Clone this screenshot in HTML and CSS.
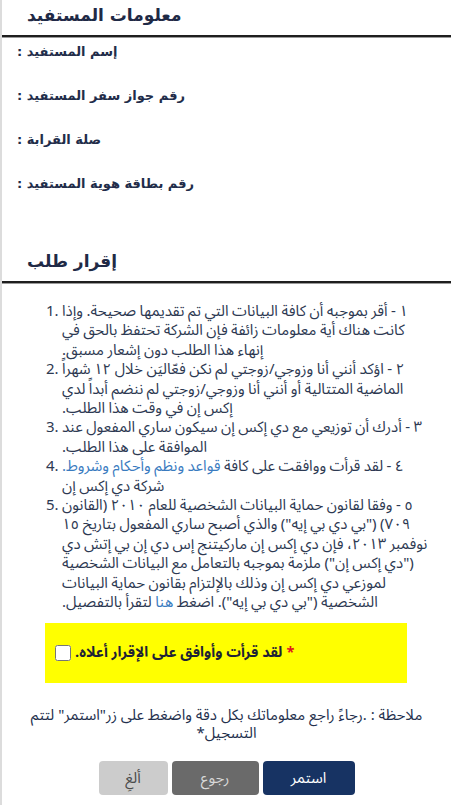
FILE: index.html
```html
<!DOCTYPE html>
<html lang="ar">
<head>
<meta charset="utf-8">
<title>معلومات المستفيد</title>
<link rel="stylesheet" href="styles.css">
</head>
<body>
<div class="page" dir="rtl">
  <section class="block">
    <h2 class="block-title">معلومات المستفيد</h2>
    <div class="fields">
      <div class="field">إسم المستفيد :</div>
      <div class="field">رقم جواز سفر المستفيد :</div>
      <div class="field">صلة القرابة :</div>
      <div class="field">رقم بطاقة هوية المستفيد :</div>
    </div>
  </section>

  <section class="block block-terms">
    <h2 class="block-title">إقرار طلب</h2>
    <ol class="terms" dir="ltr">
      <li><div class="term" dir="rtl">١ - أقر بموجبه أن كافة البيانات التي تم تقديمها صحيحة. وإذا كانت هناك أية معلومات زائفة فإن الشركة تحتفظ بالحق في إنهاء هذا الطلب دون إشعار مسبق.</div></li>
      <li><div class="term" dir="rtl">٢ - اؤكد أنني أنا وزوجي/زوجتي لم نكن فعّاليَن خلال ١٢ شهراً الماضية المتتالية أو أنني أنا وزوجي/زوجتي لم ننضم أبداً لدي إكس إن في وقت هذا الطلب.</div></li>
      <li><div class="term" dir="rtl">٣ - أدرك أن توزيعي مع دي إكس إن سيكون ساري المفعول عند الموافقة على هذا الطلب.</div></li>
      <li><div class="term" dir="rtl">٤ - لقد قرأت ووافقت على كافة <a class="link" href="#">قواعد ونظم وأحكام وشروط.</a> شركة دي إكس إن</div></li>
      <li><div class="term" dir="rtl">٥ - وفقا لقانون حماية البيانات الشخصية للعام ٢٠١٠ (القانون ٧٠٩) ("بي دي بي إيه") والذي أصبح ساري المفعول بتاريخ ١٥ نوفمبر ٢٠١٣، فإن دي إكس إن ماركيتنج إس دي إن بي إتش دي ("دي إكس إن") ملزمة بموجبه بالتعامل مع البيانات الشخصية لموزعي دي إكس إن وذلك بالإلتزام بقانون حماية البيانات الشخصية ("بي دي بي إيه"). اضغط <a class="link" href="#">هنا</a> لتقرأ بالتفصيل.</div></li>
    </ol>
  </section>

  <label class="agree">
    <span class="req">*</span>
    <span class="agree-text">لقد قرأت وأوافق على الإقرار أعلاه.</span>
    <input class="agree-box" type="checkbox">
  </label>

  <p class="note">ملاحظة : .رجاءً راجع معلوماتك بكل دقة واضغط على زر"استمر" لتتم التسجيل*</p>

  <div class="actions">
    <button class="btn btn-primary" type="button">استمر</button>
    <button class="btn btn-back" type="button">رجوع</button>
    <button class="btn btn-cancel" type="button">ألغِ</button>
  </div>
</div>
</body>
</html>
```

FILE: styles.css
```css
html, body {
  margin: 0;
  padding: 0;
  background: #ffffff;
}

.page {
  direction: rtl;
  min-height: 805px;
  box-sizing: border-box;
  border-left: 2px solid #dcdcdc;
  font-family: "DejaVu Sans", "Noto Sans", sans-serif;
  color: #24304d;
}

.block-title {
  margin: 0;
  padding: 1px 0 5px 25px;
  text-align: left;
  font-size: 17px;
  font-weight: bold;
  line-height: 29px;
  color: #1f2a46;
  border-bottom: 2px solid #1e1e1e;
  box-shadow: 0 1px 0 #9a9a9a;
}

.fields {
  display: flex;
  flex-direction: column;
  gap: 24px;
  padding: 5px 15px 0;
}

.field {
  text-align: left;
  font-size: 13px;
  font-weight: bold;
  line-height: 20px;
  color: #222d4a;
}

.block-terms {
  margin-top: 52px;
}

.terms {
  margin: 19px 0 0;
  padding: 0 18px 0 60px;
  font-family: "Noto Sans Arabic", "DejaVu Sans", sans-serif;
  font-size: 15px;
  line-height: 19.4px;
  word-spacing: -0.4px;
  color: #2d3952;
}

.term {
  text-align: left;
}

.link {
  color: #3a7bbf;
  text-decoration: none;
}

.agree {
  display: flex;
  align-items: center;
  justify-content: flex-end;
  gap: 4px;
  height: 60px;
  margin: 10px 44px 0 43px;
  padding: 0 9px;
  background: #ffff00;
  font-family: "Noto Sans Arabic", "DejaVu Sans", sans-serif;
  font-size: 14.5px;
  font-weight: bold;
  color: #1e2236;
}

.req {
  color: #e0141e;
}

.agree-box {
  width: 16px;
  height: 16px;
  margin: 0 0 0 1px;
}

.note {
  margin: 23px 18px 0;
  text-align: center;
  font-family: "Noto Sans Arabic", "DejaVu Sans", sans-serif;
  font-size: 15px;
  line-height: 18.5px;
  color: #24304d;
}

.actions {
  display: flex;
  justify-content: center;
  gap: 4px;
  margin-top: 18px;
}

.btn {
  height: 34px;
  border: none;
  border-radius: 4px;
  font-family: "Noto Sans Arabic", "DejaVu Sans", sans-serif;
  font-size: 15px;
}

.btn-primary {
  width: 92px;
  background: #173363;
  color: #ffffff;
}

.btn-back {
  width: 87px;
  background: #6a6a6a;
  color: #d8d8d8;
}

.btn-cancel {
  width: 69px;
  background: #cccccc;
  color: #4a4a4a;
}
```
